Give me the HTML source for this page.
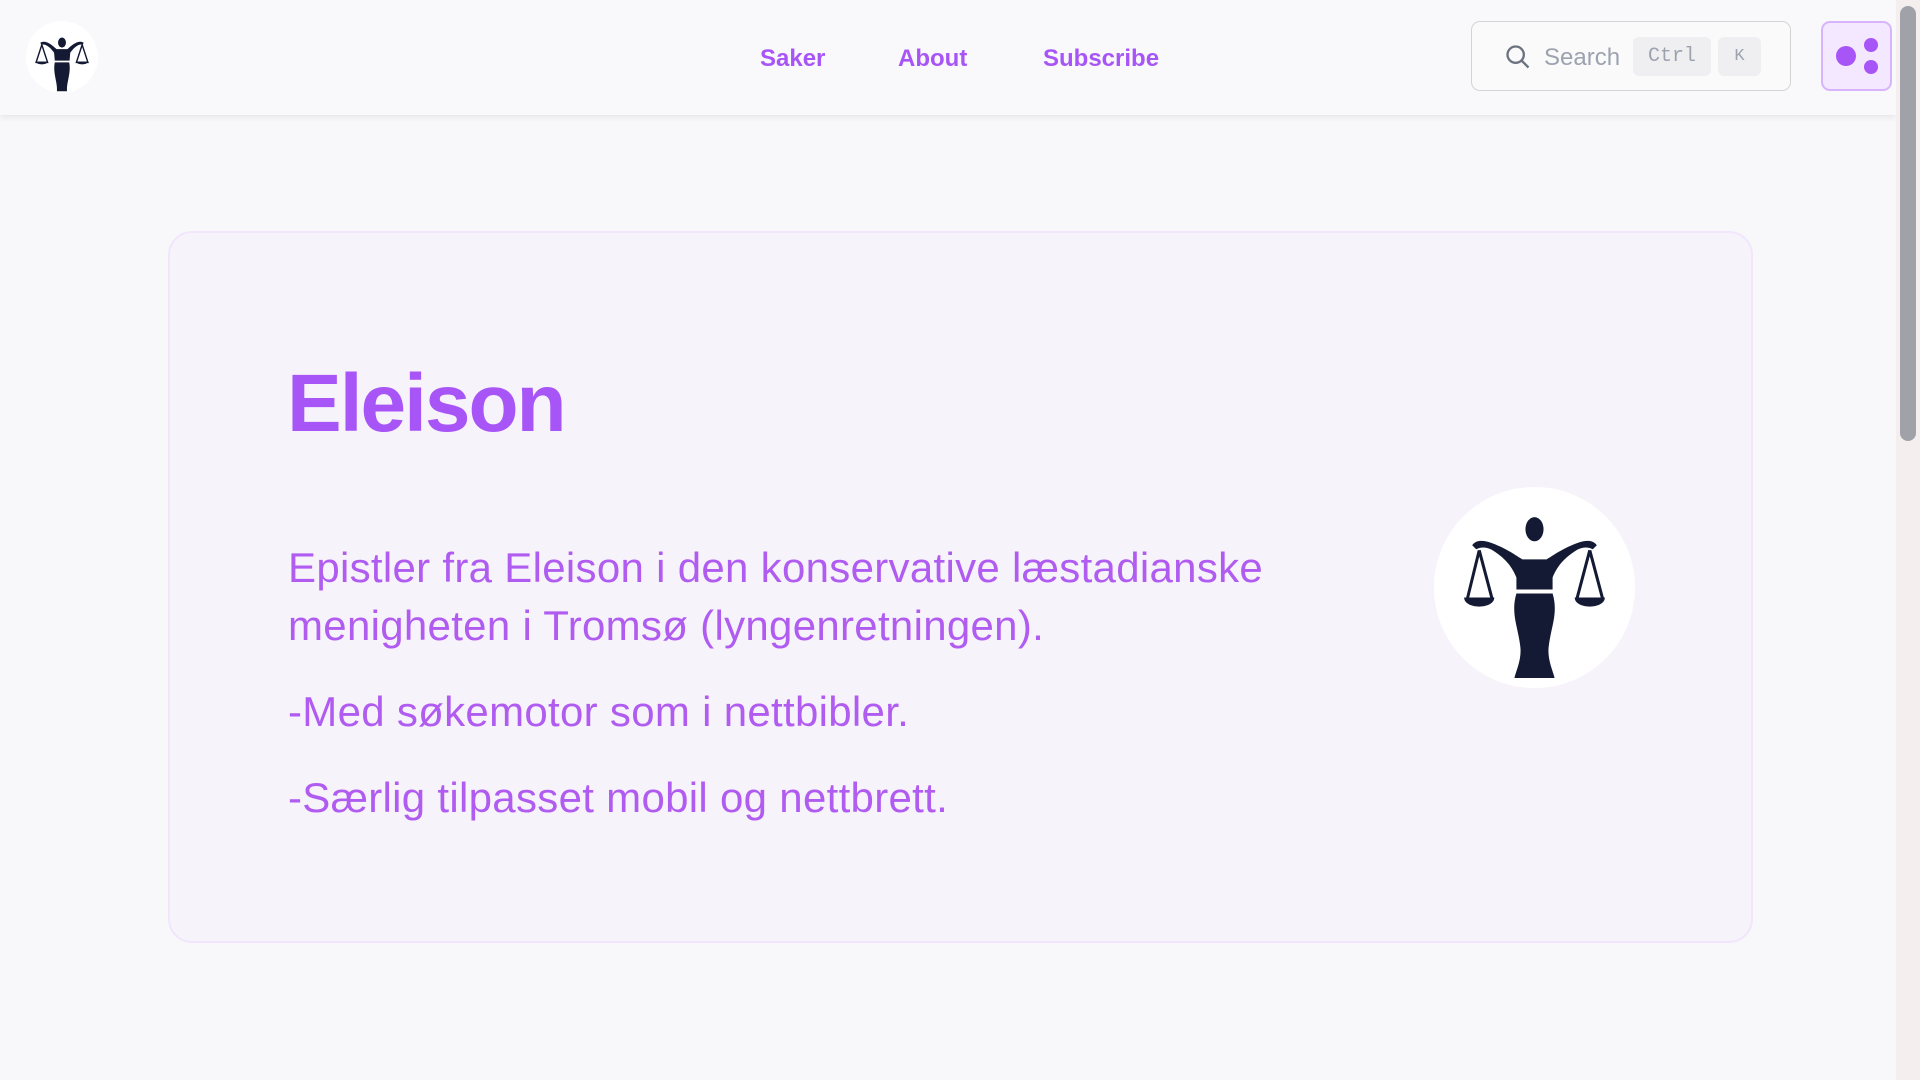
<!DOCTYPE html>
<html><head><meta charset="utf-8"><style>
*{box-sizing:border-box;margin:0;padding:0}
body{width:1920px;height:1080px;overflow:hidden;background:#f8f8fb;font-family:"Liberation Sans","DejaVu Sans",sans-serif;position:relative}
.hdr{position:absolute;left:0;top:0;width:1896px;height:115px;background:#f9f9fb;box-shadow:0 2px 6px rgba(0,0,0,.08)}
.logo{position:absolute;left:26px;top:21px;width:72px;height:72px;border-radius:50%;background:#fff}
.nav a{position:absolute;top:45px;font-size:24px;font-weight:bold;color:#a855f7;text-decoration:none}
.search{position:absolute;left:1471px;top:21px;width:320px;height:70px;border:1.5px solid #d4d4d8;border-radius:9px;background:#fafafb}
.search .t{position:absolute;left:72px;top:22px;font-size:24px;color:#9ca3af}
.kbd{position:absolute;top:15px;height:39px;background:#efeff2;border-radius:6px;font-family:"Liberation Mono",monospace;color:#9ca3af;font-size:20px;text-align:center;line-height:39px}
.theme{position:absolute;left:1821px;top:21px;width:71px;height:70px;background:#f3e8ff;border:2px solid #d8b4fe;border-radius:9px}
.sb{position:absolute;left:1896px;top:0;width:24px;height:1080px;background:#f5eeee}
.sb i{position:absolute;left:4px;top:6px;width:16px;height:435px;background:#a1a1aa;border-radius:8px}
.card{position:absolute;left:168px;top:231px;width:1585px;height:712px;border:2px solid #f1e6fb;border-radius:24px;background:#f7f3fb}
h1{position:absolute;left:117px;top:124px;font-size:82px;font-weight:bold;color:#a855f7;letter-spacing:-2px}
.p{position:absolute;left:118px;font-size:42px;color:#b05cf0;line-height:58px;white-space:nowrap;letter-spacing:.3px}
.pic{position:absolute;left:1264px;top:254px;width:201px;height:201px;border-radius:50%;background:#fff}
</style></head><body>
<div class="hdr">
 <div class="logo"><svg width="72" height="72" viewBox="0 0 200 200"><g fill="#141a33"><ellipse cx="100" cy="60" rx="11" ry="14"/><path d="M40 60c15-8 30 5 45 18h30c15-13 30-26 45-18l-2 6c-12-4-25 8-35 22l-2 22H80l-2-22C68 74 55 62 42 66z"/><path d="M80 115h40c6 30-8 55-6 80H86c2-25-12-50-6-80z"/><path d="M44 66L28 115h32z M156 66L140 115h32z" fill="none" stroke="#141a33" stroke-width="4"/><path d="M28 113h32c0 10-32 10-32 0zM140 113h32c0 10-32 10-32 0z"/></g></svg></div>
 <div class="nav"><a style="left:760px">Saker</a><a style="left:898px">About</a><a style="left:1043px">Subscribe</a></div>
 <div class="search">
  <svg style="position:absolute;left:32px;top:21px" width="28" height="28" viewBox="0 0 24 24" fill="none" stroke="#6b7280" stroke-width="2"><circle cx="10" cy="10" r="7"/><path d="M15 15l6 6"/></svg>
  <span class="t">Search</span>
  <span class="kbd" style="left:161px;width:78px">Ctrl</span>
  <span class="kbd" style="left:246px;width:43px;font-size:17px">K</span>
 </div>
 <div class="theme"><svg width="67" height="66" viewBox="0 0 67 66"><circle cx="23" cy="33" r="10" fill="#a855f7"/><circle cx="48" cy="22" r="7" fill="#a855f7"/><circle cx="48" cy="44" r="7" fill="#a855f7"/></svg></div>
</div>
<div class="sb"><i></i></div>
<div class="card">
 <h1>Eleison</h1>
 <div class="p" style="top:306px">Epistler fra Eleison i den konservative læstadianske<br>menigheten i Tromsø (lyngenretningen).</div>
 <div class="p" style="top:450px">-Med søkemotor som i nettbibler.</div>
 <div class="p" style="top:536px">-Særlig tilpasset mobil og nettbrett.</div>
 <div class="pic"><svg width="201" height="201" viewBox="0 0 200 200"><g fill="#141a33"><ellipse cx="100" cy="42" rx="9" ry="12"/><path d="M38 58c4-6 12-5 20-2 16 6 26 14 30 16h24c4-2 14-10 30-16 8-3 16-4 20 2l-4 4c-6-3-12-2-18 2-12 8-18 16-22 26v12H82V90c-4-10-10-18-22-26-6-4-12-5-18-2z"/><path d="M82 106h36c6 20-2 34-4 54-1 12 4 22 6 30H80c2-8 7-18 6-30-2-20-10-34-4-54z"/><path d="M45 63L33 112M45 63L58 112M155 63L142 112M155 63L168 112" fill="none" stroke="#141a33" stroke-width="3"/><path d="M30 110h30c0 12-30 12-30 0zM140 110h30c0 12-30 12-30 0z"/></g></svg></div>
</div>
</body></html>
